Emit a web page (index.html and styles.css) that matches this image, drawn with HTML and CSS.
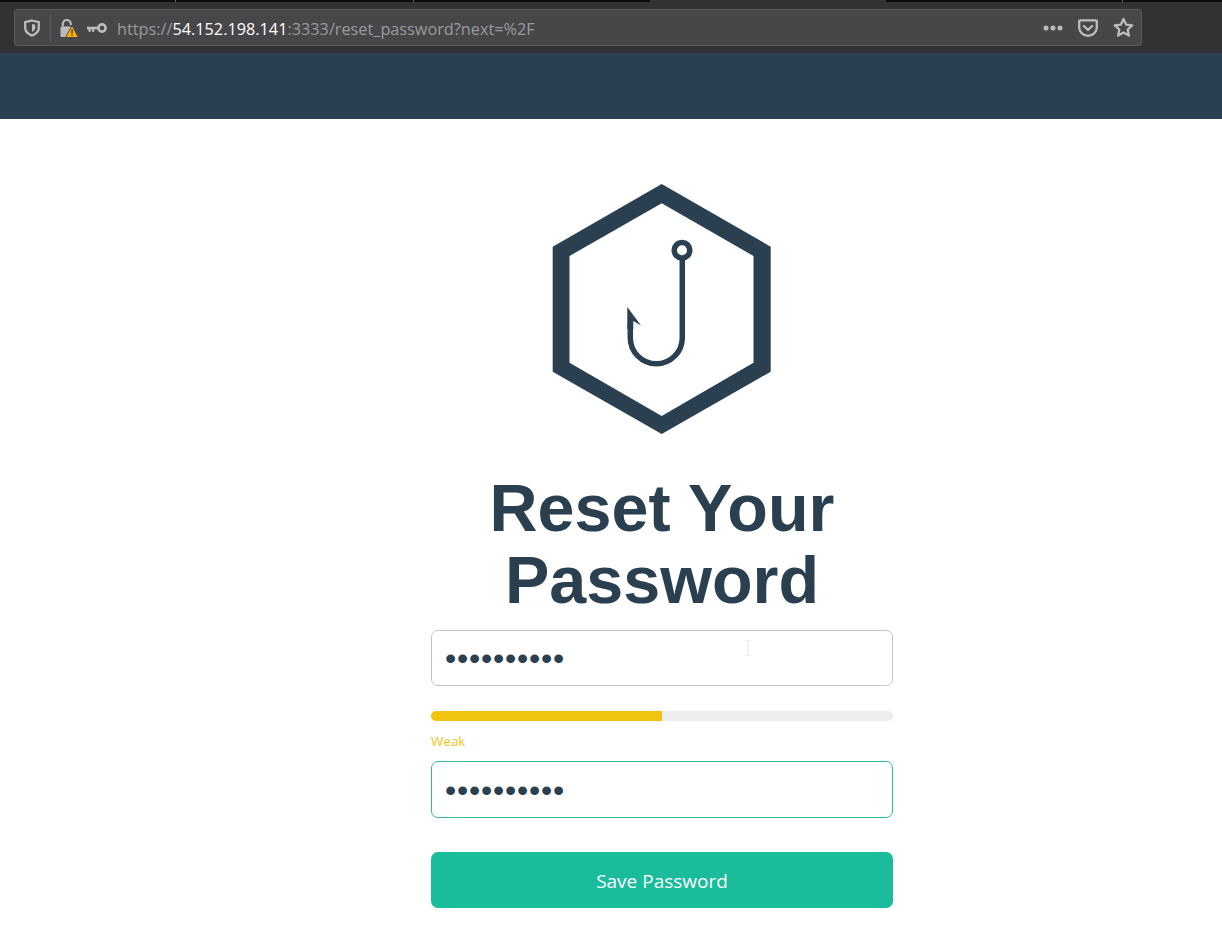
FILE: index.html
```html
<!DOCTYPE html>
<html lang="en">
<head>
<meta charset="utf-8">
<title>Reset Your Password</title>
<link rel="stylesheet" href="styles.css">
</head>
<body>
<header class="browser">
  <div class="tabstrip">
    <span class="tab tab-a"></span><span class="tab tab-b"></span><span class="tab tab-c"></span><span class="tab tab-active"></span><span class="tab tab-d"></span>
  </div>
  <div class="toolbar">
    <div class="urlbar">
      <svg class="icon shield" width="16" height="18" viewBox="0 0 16 18"><path d="M8 1.500 14.800 3.200V9c0 3.400-3 6-6.800 7.600C4.200 15 1.200 12.400 1.200 9V3.200Z" fill="none" stroke="#bcbcbd" stroke-width="2.300"/><path d="M8 5 11.300 5.800V9c0 1.500-1.500 2.900-3.300 3.900Z" fill="#bcbcbd"/></svg>
      <span class="sep"></span>
      <svg class="icon lock" width="20" height="20" viewBox="0 0 20 20"><path d="M.5 9.500a1 1 0 0 1 1-1h11a1 1 0 0 1 1 1V18a1 1 0 0 1-1 1h-11a1 1 0 0 1-1-1Z" fill="#bcbcbd"/><path d="M2.800 8.500V6a4 4 0 0 1 8 0v1" fill="none" stroke="#bcbcbd" stroke-width="2.200"/><path d="M12 7.500 18.500 19.500H5.500Z" fill="#ffb000" stroke="#474749" stroke-width="1" stroke-linejoin="round"/><path d="M12 11.500v4M12 16.500v1.500" stroke="#4a3500" stroke-width="1.400"/></svg>
      <svg class="icon key" width="20" height="12" viewBox="0 0 20 12"><circle cx="15" cy="6" r="3.600" fill="none" stroke="#bcbcbd" stroke-width="2.600"/><path d="M11.500 4.700H0v2.600h1.500v2.400h2.300V7.300h1.200v2.400h2.300V7.300h4.200Z" fill="#bcbcbd"/></svg>
      <span class="url"><span class="dim">https://</span><span class="host">54.152.198.141</span><span class="dim">:3333/reset_password?next=%2F</span></span>
      <svg class="icon dots" width="20" height="6" viewBox="0 0 20 6"><circle cx="3" cy="3" r="2.500" fill="#bcbcbd"/><circle cx="10" cy="3" r="2.500" fill="#bcbcbd"/><circle cx="17" cy="3" r="2.500" fill="#bcbcbd"/></svg>
      <svg class="icon pocket" width="20" height="18" viewBox="0 0 20 18"><path d="M2 1.300h16a.8.800 0 0 1 .8.800v6.400a8.800 8.300 0 0 1-17.600 0V2.100a.8.800 0 0 1 .8-.8Z" fill="none" stroke="#bcbcbd" stroke-width="2.300"/><path d="M5.800 7 10 10.800 14.200 7" fill="none" stroke="#bcbcbd" stroke-width="2.300" stroke-linecap="round" stroke-linejoin="round"/></svg>
      <svg class="icon star" width="22" height="22" viewBox="0 0 22 22"><path d="M10.500 2 13.100 7.600 19.200 8.300 14.700 12.500 15.900 18.600 10.500 15.500 5.100 18.600 6.300 12.500 1.800 8.300 7.900 7.600Z" fill="none" stroke="#bcbcbd" stroke-width="2.300" stroke-linejoin="round"/></svg>
    </div>
  </div>
</header>
<div class="navbar"></div>
<main class="content">
  <svg class="logo" width="220" height="252" viewBox="0 0 220 252">
    <path fill-rule="evenodd" fill="#2a3f4f" d="M109.700 0 218.700 62.700V187.700L109.700 250 .7 187.700V62.700ZM109.700 19.300 17.500 72V178.700L109.700 232 201.500 178.700V72Z"/>
    <circle cx="130" cy="66.300" r="7.800" fill="none" stroke="#2a3f4f" stroke-width="5.500"/>
    <path d="M130.300 75V153.700a26 26 0 0 1-52 0V140" fill="none" stroke="#2a3f4f" stroke-width="5.500"/>
    <path d="M75.300 123 89 141.500 81.300 137V145H75.300Z" fill="#2a3f4f"/>
  </svg>
  <h1 class="title">Reset Your Password</h1>
  <form class="form">
    <input class="field" type="password" value="aaaaaaaaaa" aria-label="Password">
    <div class="meter"><div class="meter-fill" style="width:50%"></div></div>
    <div class="strength">Weak</div>
    <input class="field field-valid" type="password" value="aaaaaaaaaa" aria-label="Confirm password">
    <button class="save" type="button">Save Password</button>
  </form>
  <svg class="cursor" width="6" height="16" viewBox="0 0 6 16"><path d="M0 .5h6M0 15.500h6M3 .5v15" stroke="#ececec" fill="none"/></svg>
</main>
</body>
</html>
```

FILE: styles.css
```css
* { box-sizing: border-box; }
html, body { margin: 0; padding: 0; }
body { background: #fff; font-family: "Open Sans", "Noto Sans", sans-serif; color: #2a3f4f; min-height: 951px; overflow: hidden; }
.browser { height: 53px; background: #323234; display: flex; flex-direction: column; }
.tabstrip { height: 2px; background: #0c0c0d; display: flex; }
.tab { display: block; height: 2px; }
.tab-a { width: 175px; }
.tab-b { width: 238px; border-left: 1px solid #666; }
.tab-c { width: 237px; border-left: 1px solid #666; }
.tab-active { width: 236px; background: #323234; }
.tab-d { width: 237px; border-right: 1px solid #666; }
.toolbar { flex: 1; padding: 7px 80px 0 14px; }
.urlbar { width: 1128px; height: 37px; background: #474749; border: 1px solid #5a5a5c; border-radius: 3px; display: flex; align-items: center; padding-left: 9px; }
.icon { flex: none; display: block; }
.sep { width: 1px; height: 26px; background: #5f5f61; margin: 0 9px 0 10px; }
.lock { margin: 0 7px 0 0; }
.key { margin-right: 10px; }
.url { flex: 1; padding-top: 2px; font-family: "Open Sans", sans-serif; font-size: 16.25px; line-height: 20px; white-space: nowrap; }
.dim { color: #9a9a9c; }
.host { color: #fff; }
.dots { margin-right: 15px; }
.pocket { margin-right: 15px; }
.star { margin-right: 6px; }
.navbar { height: 66px; background: #2a3f4f; }
.content { position: relative; display: flex; flex-direction: column; align-items: center; padding: 65px 0 0 102px; }
.logo { display: block; }
.title { width: 462px; margin: 36px 0 0; text-align: center; font-family: "Liberation Sans", Arial, sans-serif; font-weight: 700; font-size: 66.5px; line-height: 72px; color: #2a3f4f; }
.form { width: 462px; display: flex; flex-direction: column; margin-top: 14px; }
.field { display: block; width: 100%; height: 56px; padding: 0 13px; background: #fff; border: 1px solid #c4c4c4; border-radius: 7px; font-family: "Liberation Sans", Arial, sans-serif; font-size: 32px; letter-spacing: .8px; color: #2a3f4f; outline: none; }
.field-valid { height: 57px; padding-top: 2px; border-color: #2fb893; }
.meter { height: 10px; margin-top: 25px; background: #ecedee; border-radius: 5px; overflow: hidden; }
.meter-fill { height: 100%; background: #f1c40f; }
.strength { margin: 11px 0 11px; color: #f1c40f; font-size: 13.4px; line-height: 18px; }
.save { height: 56px; margin-top: 34px; padding-top: 2px; border: 0; border-radius: 7px; background: #1abc9c; color: #fff; font-family: "Open Sans", sans-serif; font-size: 19px; cursor: pointer; }
.cursor { position: absolute; left: 745px; top: 521px; }
```
